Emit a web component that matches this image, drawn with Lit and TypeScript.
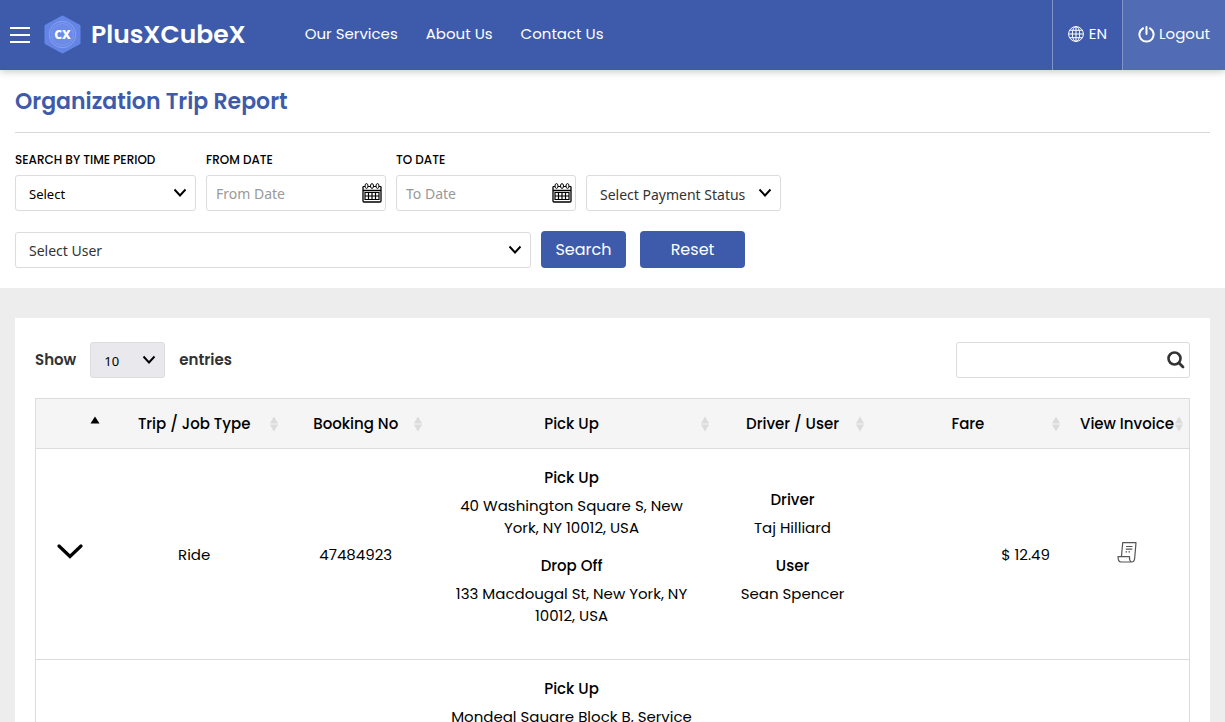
import { LitElement, html, svg, css, nothing } from "lit";
import { customElement, state } from "lit/decorators.js";

interface Trip {
  type: string;
  booking: string;
  pickUp: string;
  dropOff: string;
  driver: string;
  user: string;
  fare: string;
}

const trips: Trip[] = [
  {
    type: "Ride",
    booking: "47484923",
    pickUp: "40 Washington Square S, New York, NY 10012, USA",
    dropOff: "133 Macdougal St, New York, NY 10012, USA",
    driver: "Taj Hilliard",
    user: "Sean Spencer",
    fare: "$ 12.49",
  },
  {
    type: "Ride",
    booking: "47484917",
    pickUp:
      "Mondeal Square Block B, Service Road, Sarkhej - Gandhinagar Highway, Prahlad Nagar, Ahmedabad, Gujarat 380015, India",
    dropOff:
      "Shivalik Shilp, Iskcon Cross Road, Sarkhej - Gandhinagar Highway, Ambli, Ahmedabad, Gujarat 380058, India",
    driver: "Taj Hilliard",
    user: "Sean Spencer",
    fare: "$ 18.20",
  },
];

const columns = [
  { key: "toggle", label: "" },
  { key: "type", label: "Trip / Job Type" },
  { key: "booking", label: "Booking No" },
  { key: "route", label: "Pick Up" },
  { key: "people", label: "Driver / User" },
  { key: "fare", label: "Fare" },
  { key: "invoice", label: "View Invoice" },
];

const chevron = html`<svg class="chevron" width="14" height="10" viewBox="0 0 14 10" aria-hidden="true">
  <path d="M1.500 1.500 7 7.500l5.500-6" fill="none" stroke="#000" stroke-width="1.900" />
</svg>`;

const calendar = html`<svg width="20" height="20" viewBox="0 0 20 20" aria-hidden="true">
  <path d="M1 3.500V18q0 1 1 1h16q1 0 1-1V3.500M1 7.500h18" fill="none" stroke="#000" stroke-width="1.300" />
  <g fill="none" stroke="#000" stroke-width="1">
    <ellipse cx="4.500" cy="3" rx="1.500" ry="2.400" />
    <ellipse cx="10" cy="3" rx="1.500" ry="2.400" />
    <ellipse cx="15.500" cy="3" rx="1.500" ry="2.400" />
    <path d="M6 3.500h2.500M11.500 3.500H14M1 3.500h2M17 3.500h2" />
  </g>
  <path d="M3 9.500h14v7H3zM3 13h14M6.500 9.500v7M10 9.500v7M13.500 9.500v7" fill="none" stroke="#000" stroke-width="1.200" />
</svg>`;

const sortIcon = (ascending: boolean) => html`<svg class="sort" width="10" height="16" viewBox="0 0 10 16" aria-hidden="true">
  ${ascending
    ? svg`<path d="M5 .5l4.500 7h-9z" fill="#000" />`
    : svg`<path d="M5 .5l4.200 7H.8zM5 15.500l4.200-7H.8z" fill="#dcdcdc" />`}
</svg>`;

@customElement("app-root")
export class AppRoot extends LitElement {
  @state() private expanded = new Set<string>();

  static styles = css`
    :host {
      display: block;
      min-height: 100vh;
      background: #ededed;
      color: #000;
      font-family: Poppins, Inter, sans-serif;
      font-size: 15px;
      line-height: 22px;
    }
    * {
      box-sizing: border-box;
    }
    button,
    input,
    select {
      font: inherit;
      color: inherit;
      margin: 0;
    }
    button {
      border: 0;
      padding: 0;
      background: none;
      cursor: pointer;
    }
    svg {
      display: block;
      flex: none;
    }
    .topbar {
      position: sticky;
      top: 0;
      display: flex;
      align-items: stretch;
      height: 70px;
      background: #3e5bab;
      color: #fff;
      box-shadow: 0 1px 8px rgba(0, 0, 0, 0.25);
      z-index: 1;
    }
    .topbar a {
      color: inherit;
      text-decoration: none;
    }
    .menu {
      padding: 0 14px 0 10px;
    }
    .brand {
      display: flex;
      align-items: center;
      gap: 10px;
      font-size: 25px;
      font-weight: 600;
    }
    .brand svg {
      margin-bottom: 2px;
    }
    .logo-text {
      font-family: "Open Sans", "Noto Sans", sans-serif;
      font-size: 12px;
      font-weight: 800;
    }
    .nav {
      display: flex;
      align-items: center;
      gap: 28px;
      margin: 0 auto 0 59px;
      padding-bottom: 2px;
    }
    .action {
      display: flex;
      align-items: center;
      gap: 5px;
      padding: 0 15px 2px;
      border-left: 1px solid #8394c8;
    }
    .logout {
      background: #516cb4;
      gap: 4px;
    }
    .filters {
      background: #fff;
      padding: 0 15px 20px;
    }
    h1 {
      margin: 0 0 16px;
      padding: 15px 0 14px;
      border-bottom: 1px solid #d8d8d8;
      color: #3e5bab;
      font-size: 22px;
      line-height: 33px;
      font-weight: 600;
    }
    .row {
      display: flex;
      flex-wrap: wrap;
      align-items: flex-end;
      gap: 10px;
    }
    .row + .row {
      align-items: center;
      margin-top: 20px;
    }
    .field {
      display: flex;
      flex-direction: column;
      gap: 4px;
      width: 180px;
    }
    .field.period {
      width: 181px;
    }
    .field.status {
      width: 195px;
    }
    .field.user {
      width: 516px;
    }
    .field label {
      font-size: 12px;
      line-height: 22px;
      font-weight: 500;
      text-transform: uppercase;
    }
    .control {
      display: grid;
      align-items: center;
    }
    .control > * {
      grid-area: 1 / 1;
    }
    .control select,
    .control input {
      width: 100%;
      height: 36px;
      border: 1px solid #dcdcdc;
      border-radius: 3px;
      background: #fff;
      font-family: Tahoma, "Noto Sans", sans-serif;
      font-size: 14px;
      font-weight: 400;
      appearance: none;
      outline: none;
    }
    .control select {
      padding: 3px 30px 0 13px;
      color: #333;
    }
    .control .compact {
      padding-top: 1px;
      font-size: 13px;
      color: #000;
    }
    .control input {
      padding: 0 34px 0 9px;
    }
    .control input::placeholder {
      color: #999;
      opacity: 1;
    }
    .control .chevron {
      justify-self: end;
      margin-right: 9px;
      pointer-events: none;
    }
    .control button {
      justify-self: end;
      margin-right: 4px;
    }
    .primary {
      width: 85px;
      height: 37px;
      border-radius: 4px;
      background: #3e5bab;
      color: #fff;
      font-size: 16px;
    }
    .reset {
      width: 105px;
      margin-left: 4px;
    }
    .card {
      padding: 30px 15px;
    }
    .panel {
      padding: 24px 20px;
      background: #fff;
    }
    .tools {
      display: flex;
      justify-content: space-between;
      margin-bottom: 20px;
    }
    .length {
      display: flex;
      align-items: center;
      gap: 14px;
      color: #333;
      font-weight: 600;
    }
    .length .control {
      width: 75px;
    }
    .length .control select {
      background: #e9e9ed;
    }
    .find {
      width: 234px;
    }
    table {
      width: 100%;
      table-layout: fixed;
      border-collapse: collapse;
      border: 1px solid #dcdcdc;
      text-align: center;
    }
    tr {
      border-bottom: 1px solid #dcdcdc;
    }
    thead {
      background: #f5f5f5;
    }
    th {
      height: 50px;
      padding: 0 5px;
      font-weight: 500;
    }
    .toggle { width: 6%; }
    .type { width: 15.5%; }
    .booking { width: 12.5%; }
    .route { width: 24.9%; }
    .people { width: 13.4%; }
    .fare { width: 17%; }
    .invoice { width: 10.7%; }
    .heading {
      display: grid;
      grid-template-columns: 1fr auto 1fr;
      align-items: center;
      width: 100%;
      white-space: nowrap;
    }
    .heading .sort {
      justify-self: end;
    }
    td {
      padding: 18px 16px 16px;
    }
    td.fare {
      text-align: right;
    }
    td button,
    td a {
      display: inline-block;
      vertical-align: middle;
    }
    td.toggle,
    td.invoice {
      padding: 0 0 4px;
    }
    dl,
    dd,
    dt {
      margin: 0;
    }
    dt {
      margin-bottom: 6px;
      font-weight: 500;
    }
    dd {
      margin-bottom: 16px;
    }
  `;

  private toggle(id: string) {
    const next = new Set(this.expanded);
    next.has(id) ? next.delete(id) : next.add(id);
    this.expanded = next;
  }

  private renderHeader() {
    return html`<header class="topbar">
      <button class="menu" aria-label="Menu">
        <svg width="20" height="16" viewBox="0 0 20 16"><path d="M0 1h20M0 8h20M0 15h20" stroke="#fff" stroke-width="2" /></svg>
      </button>
      <a class="brand" href="#">
        <svg width="37" height="39" viewBox="0 0 37 39" aria-hidden="true">
          <path d="M18.500 2 35 11v17l-16.500 9L2 28V11z" fill="#6485e6" stroke="#6485e6" stroke-width="3" stroke-linejoin="round" />
          <circle cx="18.500" cy="19.500" r="13.200" fill="none" stroke="#8ba3ee" />
          <circle cx="18.500" cy="19.500" r="11" fill="#6c8be8" stroke="#7f9aec" />
          <text class="logo-text" x="18.500" y="23.500" text-anchor="middle" fill="#fff">CX</text>
        </svg>
        <span>PlusXCubeX</span>
      </a>
      <nav class="nav">
        <a href="#services">Our Services</a>
        <a href="#about">About Us</a>
        <a href="#contact">Contact Us</a>
      </nav>
      <a class="action" href="#language">
        <svg width="16" height="16" viewBox="0 0 16 16" fill="none" stroke="#fff" aria-hidden="true">
          <circle cx="8" cy="8" r="7.400" /><ellipse cx="8" cy="8" rx="3.700" ry="7.400" />
          <path d="M8 .6v14.800M.6 8h14.800M1.700 4.300h12.600M1.700 11.700h12.600" />
        </svg>
        EN
      </a>
      <a class="action logout" href="#logout">
        <svg width="17" height="17" viewBox="0 0 17 17" fill="none" stroke="#fff" stroke-width="2" stroke-linecap="round" aria-hidden="true">
          <path d="M8.500 1v7M5 2.300a7.100 7.100 0 1 0 7 0" />
        </svg>
        Logout
      </a>
    </header>`;
  }

  private renderDate(id: string, label: string) {
    return html`<div class="field">
      <label for=${id}>${label}</label>
      <div class="control">
        <input id=${id} type="text" placeholder=${label} />
        <button aria-label="Pick ${label}">${calendar}</button>
      </div>
    </div>`;
  }

  private renderFilters() {
    return html`<section class="filters">
      <h1>Organization Trip Report</h1>
      <div class="row">
        <div class="field period">
          <label for="period">Search by time period</label>
          <div class="control">
            <select id="period" class="compact"><option>Select</option></select>
            ${chevron}
          </div>
        </div>
        ${this.renderDate("from", "From Date")} ${this.renderDate("to", "To Date")}
        <div class="field status">
          <div class="control">
            <select aria-label="Payment status"><option>Select Payment Status</option></select>
            ${chevron}
          </div>
        </div>
      </div>
      <div class="row">
        <div class="field user">
          <div class="control">
            <select aria-label="User"><option>Select User</option></select>
            ${chevron}
          </div>
        </div>
        <button class="primary">Search</button>
        <button class="primary reset">Reset</button>
      </div>
    </section>`;
  }

  private renderTrip(trip: Trip) {
    return html`<tr>
      <td class="toggle">
        <button
          aria-label="Trip details"
          aria-expanded=${this.expanded.has(trip.booking) ? "true" : "false"}
          @click=${() => this.toggle(trip.booking)}
        >
          <svg width="26" height="20" viewBox="0 0 26 20"><path d="M2 3l11 10.500L24 3" fill="none" stroke="#000" stroke-width="3.200" stroke-linecap="round" /></svg>
        </button>
      </td>
      <td>${trip.type}</td>
      <td>${trip.booking}</td>
      <td>
        <dl>
          <dt>Pick Up</dt>
          <dd>${trip.pickUp}</dd>
          <dt>Drop Off</dt>
          <dd>${trip.dropOff}</dd>
        </dl>
      </td>
      <td>
        <dl>
          <dt>Driver</dt>
          <dd>${trip.driver}</dd>
          <dt>User</dt>
          <dd>${trip.user}</dd>
        </dl>
      </td>
      <td class="fare">${trip.fare}</td>
      <td class="invoice">
        <a href="#invoice-${trip.booking}" aria-label="View invoice">
          <svg width="20" height="22" viewBox="0 0 20 22" fill="none" stroke="#555" stroke-width="1.200" stroke-linejoin="round">
            <path d="M4.500 15 5.700 1.600H19L17.700 17q-.3 4-3 4H4Q1 21 1 15.600h11.500q-.2 4 1.500 5.200" />
            <path d="M9 5.500h6.500M8.800 8.200h6.500M8.600 10.900h1.500M11.500 10.900H13" />
          </svg>
        </a>
      </td>
    </tr>`;
  }

  render() {
    return html`${this.renderHeader()}
      <main>
        ${this.renderFilters()}
        <section class="card">
          <div class="panel">
            <div class="tools">
              <div class="length">
                <label for="length">Show</label>
                <div class="control">
                  <select id="length" class="compact"><option>10</option></select>
                  ${chevron}
                </div>
                <span>entries</span>
              </div>
              <div class="control find">
                <input type="text" aria-label="Search trips" />
                <button aria-label="Search">
                  <svg width="20" height="20" viewBox="0 0 20 20" fill="none" stroke="#333" stroke-linecap="round">
                    <circle cx="8.500" cy="8.500" r="6" stroke-width="2.600" /><path d="m13.300 13.300 3.700 3.700" stroke-width="2.800" />
                  </svg>
                </button>
              </div>
            </div>
            <table>
              <thead>
                <tr>
                  ${columns.map(
                    (c) => html`<th class=${c.key} aria-sort=${c.label ? nothing : "ascending"}>
                      <button class="heading" aria-label=${c.label || "Order"}>
                        <span></span><span>${c.label}</span>${sortIcon(!c.label)}
                      </button>
                    </th>`
                  )}
                </tr>
              </thead>
              <tbody>
                ${trips.map((t) => this.renderTrip(t))}
              </tbody>
            </table>
          </div>
        </section>
      </main>`;
  }
}
